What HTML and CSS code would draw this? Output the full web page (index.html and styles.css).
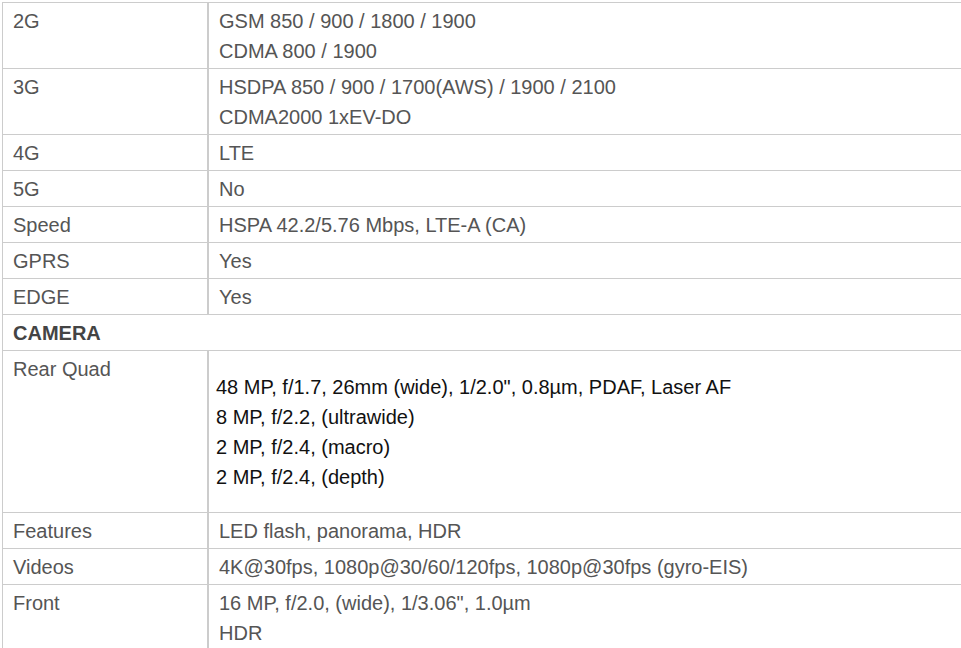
FILE: index.html
```html
<!DOCTYPE html>
<html>
<head>
<meta charset="utf-8">
<link rel="stylesheet" href="styles.css">
</head>
<body>
<table class="specs">
  <colgroup><col class="c-key"><col class="c-val"></colgroup>
  <tr><td class="k">2G</td><td class="v">GSM 850 / 900 / 1800 / 1900<br>CDMA 800 / 1900</td></tr>
  <tr><td class="k">3G</td><td class="v">HSDPA 850 / 900 / 1700(AWS) / 1900 / 2100<br>CDMA2000 1xEV-DO</td></tr>
  <tr><td class="k">4G</td><td class="v">LTE</td></tr>
  <tr><td class="k">5G</td><td class="v">No</td></tr>
  <tr><td class="k">Speed</td><td class="v">HSPA 42.2/5.76 Mbps, LTE-A (CA)</td></tr>
  <tr><td class="k">GPRS</td><td class="v">Yes</td></tr>
  <tr><td class="k">EDGE</td><td class="v">Yes</td></tr>
  <tr><td class="section" colspan="2">CAMERA</td></tr>
  <tr><td class="k">Rear Quad</td><td class="v"><div class="cam">48 MP, f/1.7, 26mm (wide), 1/2.0", 0.8µm, PDAF, Laser AF<br>8 MP, f/2.2, (ultrawide)<br>2 MP, f/2.4, (macro)<br>2 MP, f/2.4, (depth)</div></td></tr>
  <tr><td class="k">Features</td><td class="v">LED flash, panorama, HDR</td></tr>
  <tr><td class="k">Videos</td><td class="v">4K@30fps, 1080p@30/60/120fps, 1080p@30fps (gyro-EIS)</td></tr>
  <tr><td class="k">Front</td><td class="v">16 MP, f/2.0, (wide), 1/3.06", 1.0µm<br>HDR</td></tr>
</table>
</body>
</html>
```
FILE: styles.css
```css
html, body {
  margin: 0;
  padding: 0;
  background: #fff;
  overflow: hidden;
}
body {
  font-family: "Liberation Sans", Arial, sans-serif;
  font-size: 20px;
  color: #555;
}
.specs {
  margin: 2px 0 0 2px;
  width: 1000px;
  table-layout: fixed;
  border-collapse: separate;
  border-spacing: 0;
  border-top: 1px solid #ccc;
  border-left: 1px solid #ccc;
}
.c-key { width: 206px; }
.specs td {
  padding: 3px 10px 2px 10px;
  line-height: 30px;
  vertical-align: top;
  border-bottom: 1px solid #ccc;
  box-sizing: border-box;
}
.specs td.k {
  border-right: 2px solid #ccc;
}
.specs td.section {
  font-weight: bold;
  color: #444;
}
.cam {
  margin: 18px 0 18px -3px;
  color: #111;
}
```
